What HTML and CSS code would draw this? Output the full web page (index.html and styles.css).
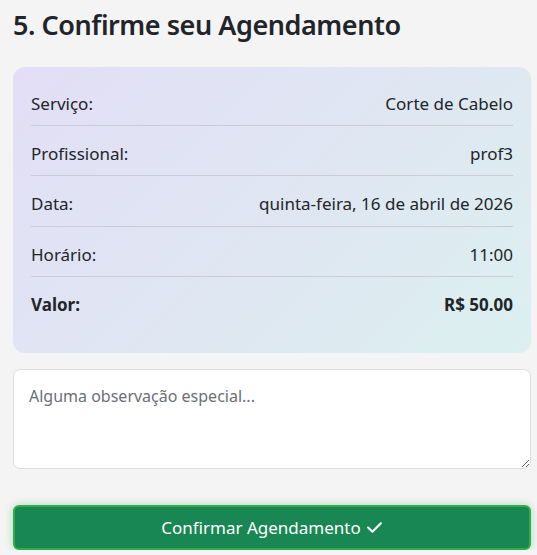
FILE: index.html
```html
<!DOCTYPE html>
<html lang="pt-BR">
<head>
  <meta charset="UTF-8">
  <meta name="viewport" content="width=device-width, initial-scale=1.0">
  <title>Confirmar Agendamento</title>
  <link rel="stylesheet" href="styles.css">
</head>
<body>

<section class="step">
  <h2 class="step-title">5. Confirme seu Agendamento</h2>

  <div class="summary">
    <div class="summary-row">
      <span>Serviço:</span>
      <span>Corte de Cabelo</span>
    </div>
    <div class="summary-row">
      <span>Profissional:</span>
      <span>prof3</span>
    </div>
    <div class="summary-row">
      <span>Data:</span>
      <span>quinta-feira, 16 de abril de 2026</span>
    </div>
    <div class="summary-row">
      <span>Horário:</span>
      <span>11:00</span>
    </div>
    <div class="summary-row total">
      <span>Valor:</span>
      <span>R$ 50.00</span>
    </div>
  </div>

  <textarea class="notes" placeholder="Alguma observação especial..."></textarea>

  <button class="confirm-btn">
    Confirmar Agendamento
    <svg class="check" viewBox="0 0 448 512" width="17" height="17"><path fill="currentColor" d="M438.6 105.4c12.5 12.5 12.5 32.8 0 45.3l-256 256c-12.5 12.5-32.8 12.5-45.3 0l-128-128c-12.5-12.5-12.5-32.8 0-45.3s32.8-12.5 45.3 0L160 338.7 393.4 105.4c12.5-12.5 32.8-12.5 45.3 0z"/></svg>
  </button>
</section>

</body>
</html>
```

FILE: styles.css
```css
body {
  margin: 0;
  background-color: #f4f4f4;
  color: #212529;
  font-family: 'Noto Sans', 'Open Sans', sans-serif;
}

.step {
  padding: 0 6px 0 13px;
}

.step-title {
  margin: 0;
  padding-top: 6px;
  height: 61px;
  font-size: 27px;
  font-weight: 600;
  letter-spacing: -0.45px;
  color: #212529;
}

.summary {
  background: linear-gradient(135deg, #e3def6 0%, #dfe6f2 50%, #dcf0f0 100%);
  border-radius: 12px;
  padding: 9px 18px 26px;
}

.summary-row {
  display: flex;
  justify-content: space-between;
  align-items: center;
  box-sizing: border-box;
  height: 50.2px;
  padding-top: 6px;
  border-bottom: 1px solid #c9ccd6;
  font-size: 17px;
}

.summary-row.total {
  border-bottom: none;
  font-weight: 700;
}

.notes {
  display: block;
  box-sizing: border-box;
  width: 100%;
  height: 100px;
  margin-top: 16px;
  padding: 15px 15px;
  border: 1px solid #dcdde1;
  border-radius: 7px;
  background: #fff;
  font-family: inherit;
  font-size: 16px;
  color: #333;
  resize: vertical;
}

.notes::placeholder {
  color: #6c6f75;
}

.confirm-btn {
  display: flex;
  align-items: center;
  justify-content: center;
  gap: 5px;
  width: 100%;
  height: 45px;
  margin-top: 36px;
  border: 2px solid #2fae4b;
  border-radius: 6px;
  background-color: #198754;
  color: #fff;
  font-family: inherit;
  font-size: 17px;
  box-shadow: 0 0 8px rgba(40, 167, 69, 0.35);
  cursor: pointer;
}

.check {
  margin-top: 1px;
}
```
